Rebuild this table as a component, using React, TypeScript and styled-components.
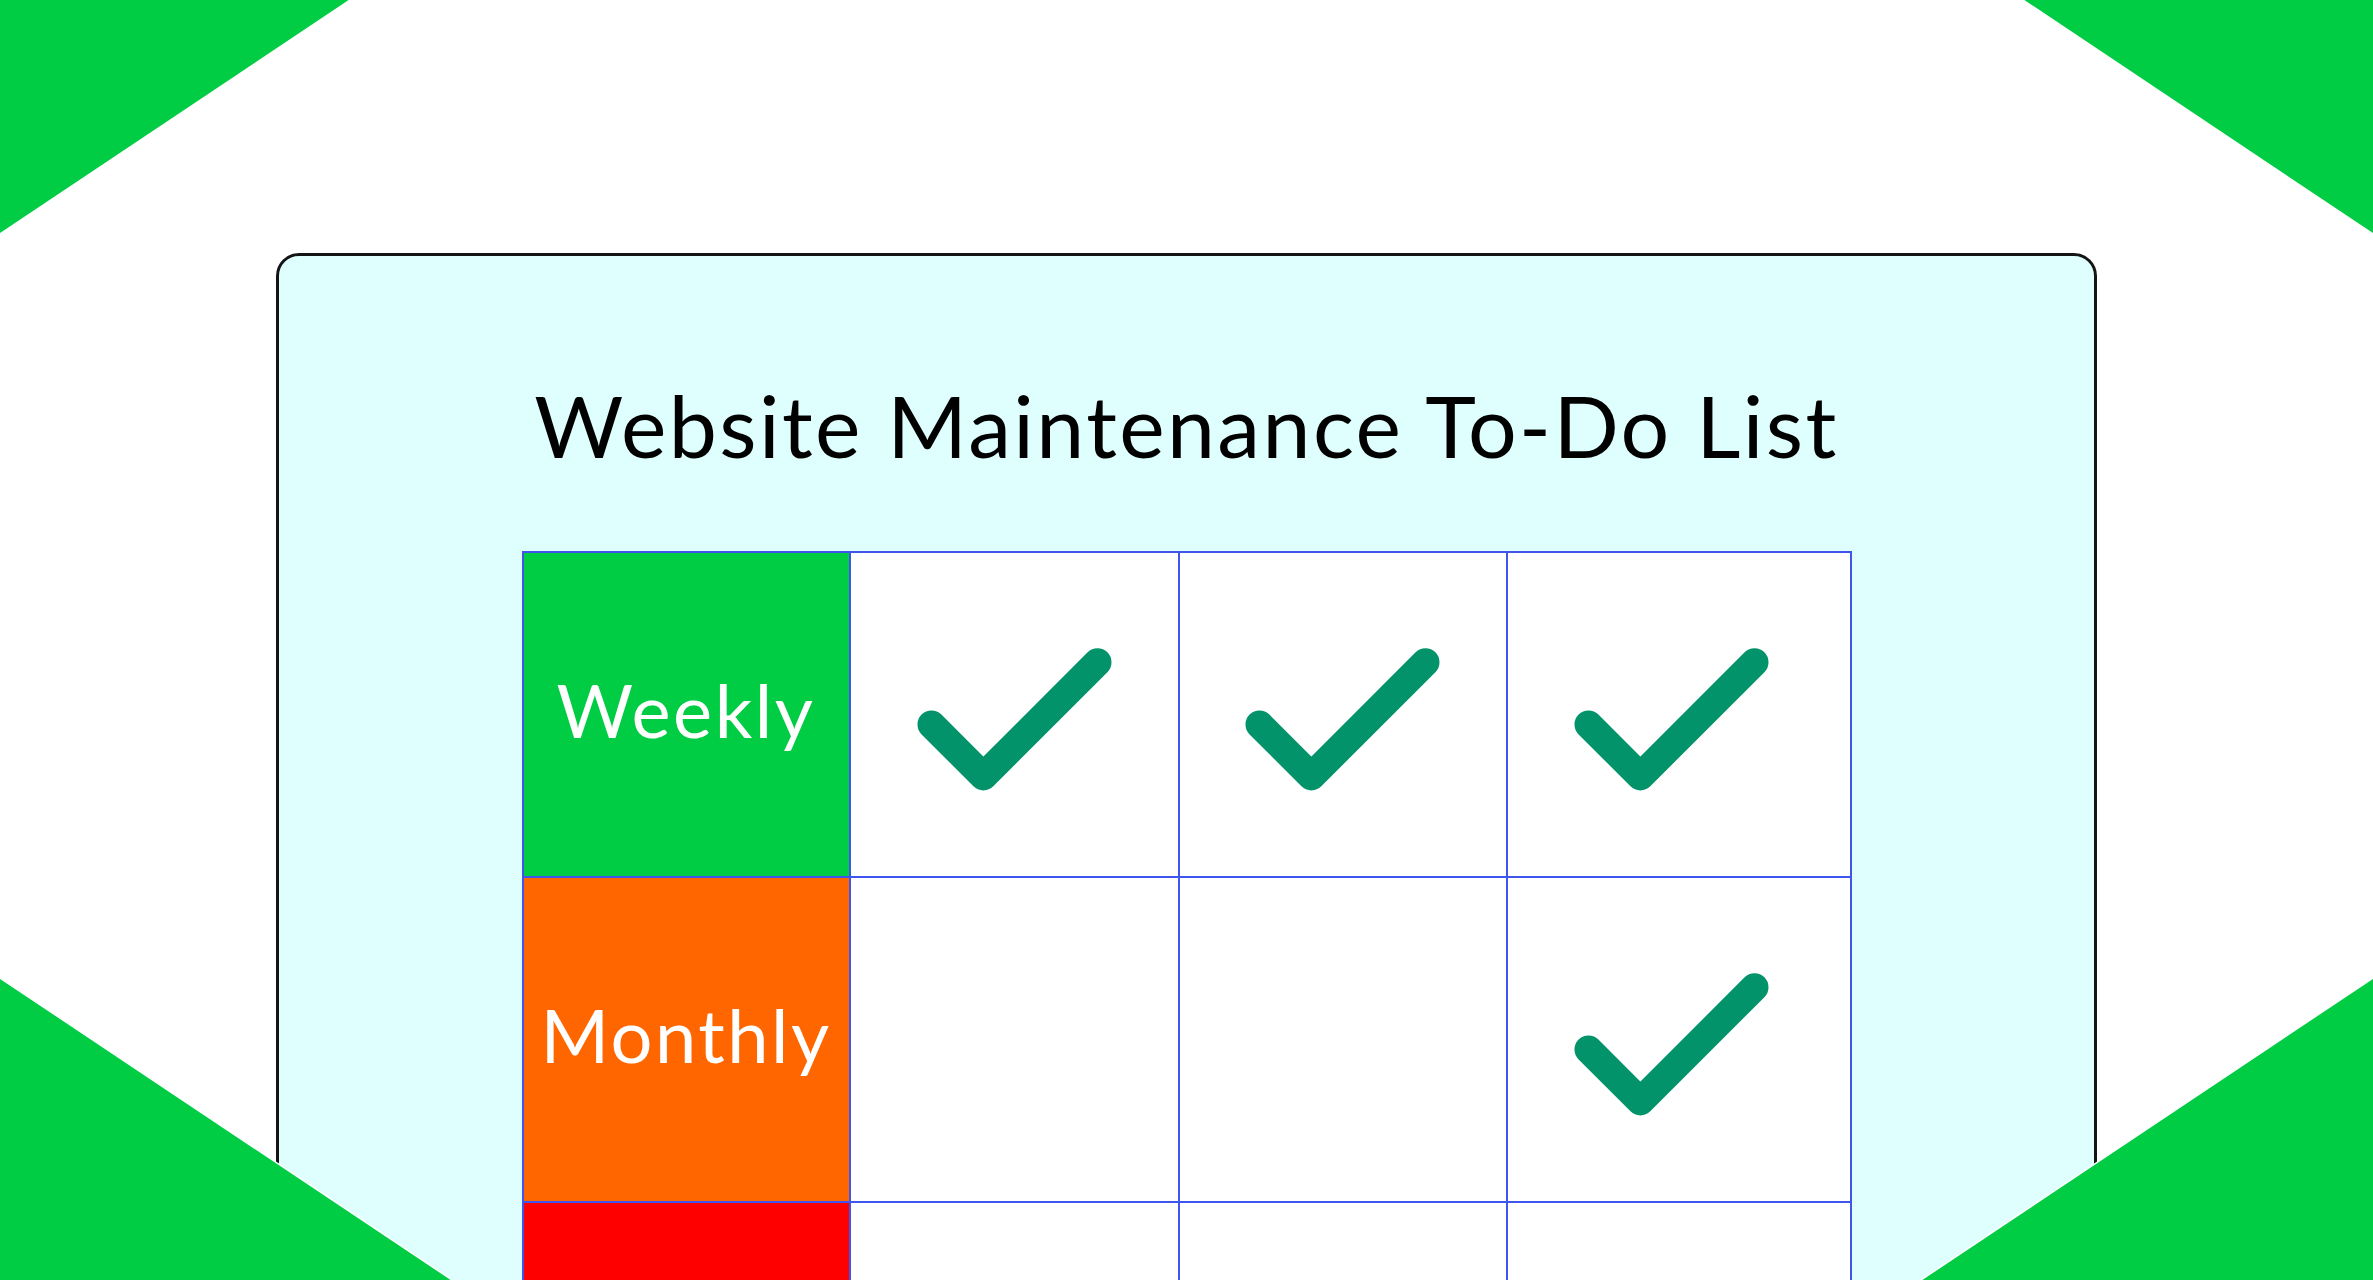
import React from "react";
import styled, { createGlobalStyle } from "styled-components";

const GlobalStyle = createGlobalStyle`
  html, body {
    margin: 0;
    padding: 0;
    background: #ffffff;
    overflow: hidden;
  }
  * { box-sizing: border-box; }
`;

const Page = styled.div`
  position: relative;
  width: 100%;
  height: 1280px;
  overflow: hidden;
  background: #ffffff;
  display: flex;
  justify-content: center;
  padding-top: 253px;
`;

const Card = styled.section`
  width: 1821px;
  min-height: 1300px;
  background: #dffefe;
  border: 3px solid #141414;
  border-radius: 23px;
  display: flex;
  flex-direction: column;
  align-items: center;
  padding-top: 126px;
`;

const Title = styled.h1`
  margin: 0 0 83px 0;
  font-family: Lato, "Noto Sans", sans-serif;
  font-weight: 400;
  font-size: 86px;
  line-height: 86px;
  color: #000000;
  letter-spacing: 2.4px;
`;

const Grid = styled.div`
  display: grid;
  grid-template-columns: 327px 329px 328px 344px;
  grid-auto-rows: 325px;
  border-top: 2px solid #3f55ee;
  border-left: 2px solid #3f55ee;
`;

const Cell = styled.div<{ $bg?: string; $wide?: boolean }>`
  background: ${(p) => p.$bg ?? "#ffffff"};
  border-right: 2px solid #3f55ee;
  border-bottom: 2px solid #3f55ee;
  display: flex;
  align-items: center;
  justify-content: center;
  padding-right: ${(p) => (p.$wide ? "14px" : "0")};
`;

const Label = styled.span`
  font-family: Lato, "Noto Sans", sans-serif;
  font-size: 74px;
  font-weight: 400;
  color: #ffffff;
  line-height: 1;
  letter-spacing: 2.5px;
  margin-top: -10px;
`;

const CheckSvg = styled.svg`
  width: 249px;
  height: 249px;
  display: block;
  margin-top: 20px;
`;

const Corner = styled.svg<{ $v: "top" | "bottom"; $h: "left" | "right" }>`
  position: absolute;
  ${(p) => (p.$v === "top" ? "top: 0;" : "bottom: 0;")}
  ${(p) => (p.$h === "left" ? "left: 0;" : "right: 0;")}
  display: block;
  pointer-events: none;
  overflow: hidden;
`;

const GREEN = "#00cc44";

const Check = () => (
  <CheckSvg viewBox="0 0 24 24" fill="none">
    <path
      d="M20 6 9 17l-5-5"
      stroke="#02936a"
      strokeWidth={2.7}
      strokeLinecap="round"
      strokeLinejoin="round"
    />
  </CheckSvg>
);

type Row = { label?: string; color: string; checks: boolean[] };

const rows: Row[] = [
  { label: "Weekly", color: GREEN, checks: [true, true, true] },
  { label: "Monthly", color: "#ff6600", checks: [false, false, true] },
  { color: "#ff0000", checks: [false, false, false] },
];

export default function App() {
  return (
    <>
      <GlobalStyle />
      <Page>
        <Card>
          <Title>Website Maintenance To-Do List</Title>
          <Grid>
            {rows.map((r, i) => (
              <React.Fragment key={i}>
                <Cell $bg={r.color}>{r.label && <Label>{r.label}</Label>}</Cell>
                {r.checks.map((c, j) => (
                  <Cell key={j} $wide={j === 2}>
                    {c && <Check />}
                  </Cell>
                ))}
              </React.Fragment>
            ))}
          </Grid>
        </Card>
        <Corner $v="top" $h="left" width="352" height="236" viewBox="0 0 352 236">
          <polygon points="0,0 350,0 0,234" fill={GREEN} />
          <line x1="350" y1="0" x2="0" y2="234" stroke="#ffffff" strokeWidth={1.5} />
        </Corner>
        <Corner $v="top" $h="right" width="352" height="236" viewBox="0 0 352 236">
          <polygon points="2,0 352,0 352,234" fill={GREEN} />
          <line x1="2" y1="0" x2="352" y2="234" stroke="#ffffff" strokeWidth={1.5} />
        </Corner>
        <Corner $v="bottom" $h="left" width="454" height="304" viewBox="0 0 454 304">
          <polygon points="0,2 452,304 0,304" fill={GREEN} />
          <line x1="0" y1="2" x2="452" y2="304" stroke="#ffffff" strokeWidth={1.5} />
        </Corner>
        <Corner $v="bottom" $h="right" width="454" height="304" viewBox="0 0 454 304">
          <polygon points="454,2 2,304 454,304" fill={GREEN} />
          <line x1="454" y1="2" x2="2" y2="304" stroke="#ffffff" strokeWidth={1.5} />
        </Corner>
      </Page>
    </>
  );
}
